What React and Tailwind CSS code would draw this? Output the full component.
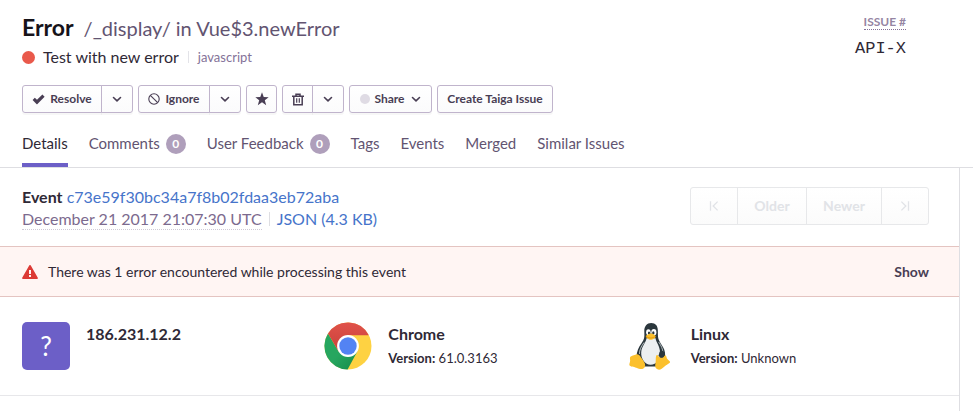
import React from "react";

const tabs = [
  { name: "Details", active: true },
  { name: "Comments", count: 0 },
  { name: "User Feedback", count: 0 },
  { name: "Tags" },
  { name: "Events" },
  { name: "Merged" },
  { name: "Similar Issues" },
];

function Chevron() {
  return (
    <svg width="10" height="7" viewBox="0 0 10 7" fill="none" stroke="currentColor" strokeWidth="1.600" strokeLinecap="round" strokeLinejoin="round" aria-hidden="true">
      <path d="M1.500 1.500 5 4.800l3.500-3.300" />
    </svg>
  );
}

function Check() {
  return (
    <svg width="13" height="11" viewBox="0 0 13 11" fill="currentColor" aria-hidden="true">
      <path d="M.6 5.900 2.800 3.700 5 5.700 10.400.6l2.200 2.100L5.200 10.300H4.700Z" />
    </svg>
  );
}

function Ban() {
  return (
    <svg width="12" height="12" viewBox="0 0 12 12" fill="none" stroke="currentColor" strokeWidth="1.100" aria-hidden="true">
      <circle cx="6" cy="6" r="5.200" />
      <path d="m2.300 2.300 7.400 7.400" />
    </svg>
  );
}

function Star() {
  return (
    <svg width="14" height="14" viewBox="0 0 13 13" fill="currentColor" aria-hidden="true">
      <path d="m6.500.3 1.600 4.300 4.600.2-3.600 2.900 1.300 4.500-3.900-2.600-3.900 2.600 1.300-4.500L.3 4.800l4.600-.2Z" />
    </svg>
  );
}

function Trash() {
  return (
    <svg width="12" height="13" viewBox="0 0 12 13" fill="none" stroke="currentColor" strokeWidth="1.500" aria-hidden="true">
      <path d="M0 3.200h12M4 3V1.200h4V3M1.800 3.500v8.200h8.400V3.500" />
      <path d="M4.700 5.300v4.400M7.300 5.300v4.400" strokeWidth="1.200" />
    </svg>
  );
}

function EdgeArrow({ flip }) {
  return (
    <svg width="10" height="10" viewBox="0 0 10 10" fill="none" stroke="currentColor" strokeWidth="1.300" className={flip ? "rotate-180" : ""} aria-hidden="true">
      <path d="M1.500.3v9.400M8.600.6 4.200 5l4.400 4.400" />
    </svg>
  );
}

function Warning() {
  return (
    <svg width="16" height="14" viewBox="0 0 16 14" aria-hidden="true">
      <path fill="#dc3a35" d="M7.200.5a1 1 0 0 1 1.600 0l7 12.300a.8.8 0 0 1-.7 1.200H.9a.8.8 0 0 1-.7-1.200Z" />
      <path fill="#fff5f3" d="M7 5h2v4H7zM7 10h2v2H7z" />
    </svg>
  );
}

function ChromeLogo() {
  return (
    <svg width="48" height="48" viewBox="0 0 48 48" aria-hidden="true">
      <defs>
        <linearGradient id="chromeRed" x1="0" y1="0" x2="0" y2="1">
          <stop offset="0" stopColor="#e0524a" />
          <stop offset="1" stopColor="#c9413a" />
        </linearGradient>
        <linearGradient id="chromeGreen" x1="0" y1="0" x2="1" y2="1">
          <stop offset=".5" stopColor="#26a65f" />
          <stop offset="1" stopColor="#178a4a" />
        </linearGradient>
      </defs>
      <circle cx="24" cy="24" r="23.500" fill="#fed242" />
      <path fill="url(#chromeGreen)" d="M4 11.500A23.500 23.500 0 0 0 23.600 47.500L33.300 29.400 24 24 14.600 29.400Z" />
      <path fill="url(#chromeRed)" d="M4 11.500A23.500 23.500 0 0 1 44.800 13.200H24L14.600 29.400Z" />
      <circle cx="24" cy="24" r="10.900" fill="#fff" />
      <circle cx="24" cy="24" r="8.700" fill="#5383f3" />
    </svg>
  );
}

function LinuxLogo() {
  return (
    <svg width="48" height="48" viewBox="0 0 48 48" aria-hidden="true">
      <g transform="translate(2 0) scale(.91 1)">
        <path fill="#2b373d" d="M24.400 1c-4.800 0-7.600 3.300-7.600 8 0 3.700.7 6.500-1.200 9.600-2.600 4.200-5.800 7.300-6.900 12.400-1 4.800 2.200 10 6 13.500h17c3-2.200 8.200-6.300 8-12.500-.2-6.500-5.500-10-7.300-15-.9-2.700-.5-5.700-.7-8.500C31.700 3.900 29.200 1 24.400 1Z" />
        <path fill="#eceff1" d="M19.200 16.200c-.3 4.200-5.300 7.600-5.800 14.200-.4 6 4.200 12.300 10.300 12.300 6.700 0 10.800-4.700 10.500-12.200-.2-6.600-4.300-9.800-5-14.300Z" />
        <path fill="none" stroke="#dce2e5" strokeWidth=".8" d="M16.500 20.500c-3 4-5.200 7.500-5 11.500M32.700 20c2.500 3.600 4.500 7 4.500 10.500" />
        <ellipse cx="21.300" cy="10.300" rx="2.500" ry="3" fill="#fff" />
        <ellipse cx="27.300" cy="10.300" rx="2.800" ry="3.200" fill="#fff" />
        <ellipse cx="22" cy="10.900" rx="1.200" ry="1.500" fill="#263238" />
        <ellipse cx="26.700" cy="10.900" rx="1.300" ry="1.600" fill="#263238" />
        <path fill="#fbc02d" d="M18.400 14c1-1 3.500-2.500 5.500-2.500s5.400 1.700 5.400 2.900c0 1.800-3.600 3.400-5.500 3.400-2 0-5.400-2.200-5.400-3.800Z" />
        <path fill="none" stroke="#d88900" strokeWidth=".7" d="M19 14.300c2.200 1.900 5.500 2.500 9.800.3" />
        <path fill="#fbc02d" d="M8.500 32.300c2.400-.5 4.200 2.300 6 4.800 1.800 2.600 4.200 5 2.800 7.900-1.600 3.300-6 2-9.300.7-2.900-1.100-6.700-1-7.500-2.500-.6-1.400 1-3.100.7-5.300-.2-1.800-.4-2.800.8-3.400 1.800-.8 4.600-1.600 6.500-2.200ZM29.800 34c.4-1.300 1.600-1.200 2.600.2 1.200 1.700 5 1.700 6.500-.4.800-1.200 2-.6 2.200 1 .3 2.500 3.200 3.600 4 4.900.6 1.400-3.800 2.800-6.400 5-2.300 2-4.800 3.800-7.500 2.600-3.300-1.500-2.400-4.500-1.900-7.500.3-2.200-.1-3.800.5-5.800Z" />
        <path fill="#2b373d" d="M33.500 30c1-1.800 4.200-1.800 5.300.3.800 1.600.2 4.300-1.500 5.100-1.800.8-4.300-.2-4.700-2.200Z" />
      </g>
    </svg>
  );
}

const buttonBase =
  "flex h-7 cursor-pointer items-center justify-center border border-[#c0b4cc] bg-linear-to-b from-white to-[#fbfbfc] text-xs font-bold text-[#493e54] shadow-[0_2px_0_rgba(0,0,0,0.03)]";

function Button({ className = "", children, ...rest }) {
  return (
    <button type="button" className={`${buttonBase} ${className}`} {...rest}>
      {children}
    </button>
  );
}

function PagerButton({ className = "", children, ...rest }) {
  return (
    <button
      type="button"
      disabled
      className={`flex h-[38px] items-center justify-center border border-[#e7e8ea] bg-linear-to-b from-white to-[#fbfbfb] text-sm font-bold text-[#e1e3e7] ${className}`}
      {...rest}
    >
      {children}
    </button>
  );
}

function ContextItem({ icon, title, version }) {
  return (
    <div className="flex gap-4">
      {icon}
      <div>
        <h3 className="text-base leading-6 font-bold text-[#2f2936]">{title}</h3>
        {version && (
          <p className="text-[13px] leading-6">
            <strong>Version:</strong> {version}
          </p>
        )}
      </div>
    </div>
  );
}

export default function App() {
  return (
    <div className="flex min-h-screen flex-col bg-white font-['Lato',sans-serif] text-[#2f2936]">
      <header className="border-b border-[#dedee2] px-[22px] pt-[13px]">
        <div className="flex justify-between">
          <div>
            <h1 className="flex h-7 items-baseline gap-[10px] leading-7">
              <span className="text-[23px] font-bold text-[#161319]">Error</span>
              <span className="text-xl leading-7 text-[#625471]">/_display/ in Vue$3.newError</span>
            </h1>
            <div className="mt-1 flex items-center">
              <span className="mr-2 size-[13px] rounded-full bg-[#e9594b]" />
              <span className="text-base leading-6">Test with new error</span>
              <span className="mx-[9px] h-3 w-px bg-[#e3e3e8]" />
              <span className="text-[13px] leading-6 text-[#847298]">javascript</span>
            </div>
          </div>
          <div className="mt-[2px] mr-[45px] flex flex-col items-end">
            <span className="border-b border-dotted border-[#847298] text-xs leading-[14px] font-bold text-[#9585a3]">ISSUE #</span>
            <span className="mt-[7px] font-['Liberation_Mono',monospace] text-[17px] leading-6">API-X</span>
          </div>
        </div>

        <div className="mt-4 flex gap-[5px]">
          <div className="flex">
            <Button className="w-20 gap-[5px] rounded-l-[3px]"><Check />Resolve</Button>
            <Button className="-ml-px w-8 rounded-r-[3px]" aria-label="More resolve options"><Chevron /></Button>
          </div>
          <div className="flex">
            <Button className="w-[72px] gap-[5px] rounded-l-[3px]"><Ban />Ignore</Button>
            <Button className="-ml-px w-8 rounded-r-[3px]" aria-label="More ignore options"><Chevron /></Button>
          </div>
          <Button className="w-[31px] rounded-[3px]" aria-label="Bookmark"><Star /></Button>
          <div className="flex">
            <Button className="w-[31px] rounded-l-[3px]" aria-label="Delete"><Trash /></Button>
            <Button className="-ml-px w-8 rounded-r-[3px]" aria-label="More delete options"><Chevron /></Button>
          </div>
          <Button className="w-[83px] rounded-[3px]">
            <span className="mr-1 size-[10px] rounded-full bg-[#dfdbe4]" />
            Share
            <span className="ml-[6px]"><Chevron /></span>
          </Button>
          <Button className="w-[116px] rounded-[3px]">Create Taiga Issue</Button>
        </div>

        <nav className="mt-[14px] flex gap-x-[21px]">
          {tabs.map((tab) => (
            <a
              key={tab.name}
              href="#"
              className={`flex h-10 items-start border-b-4 text-[15px] leading-8 ${tab.active ? "border-[#6c5fc7] text-[#2f2936]" : "border-transparent text-[#625471]"}`}
            >
              {tab.name}
              {tab.count !== undefined && (
                <span className="mt-[7px] ml-[6px] flex size-5 items-center justify-center rounded-full bg-[#af9fbb] text-xs leading-none font-bold text-white">
                  {tab.count}
                </span>
              )}
            </a>
          ))}
        </nav>
      </header>

      <main className="mr-[13px] flex-1 border-r border-[#dedee2]">
        <div className="flex items-start justify-between pt-[18px] pr-[30px] pb-4 pl-[22px]">
          <div className="text-base leading-[22px]">
            <div>
              <strong>Event</strong> <a href="#" className="text-[#4674ca]">c73e59f30bc34a7f8b02fdaa3eb72aba</a>
            </div>
            <div className="flex items-center">
              <time className="border-b border-dotted border-[#cfcad6] leading-5 text-[#7c6a8e]">December 21 2017 21:07:30 UTC</time>
              <span className="mx-[7px] h-[14px] w-px bg-[#dedee2]" />
              <a href="#" className="text-[#4674ca]">JSON (4.3 KB)</a>
            </div>
          </div>
          <div className="flex pt-px">
            <PagerButton className="w-12 rounded-l-[3px]" aria-label="Oldest"><EdgeArrow /></PagerButton>
            <PagerButton className="-ml-px w-[70px]">Older</PagerButton>
            <PagerButton className="-ml-px w-[76px]">Newer</PagerButton>
            <PagerButton className="-ml-px w-12 rounded-r-[3px]" aria-label="Newest"><EdgeArrow flip /></PagerButton>
          </div>
        </div>

        <section className="flex h-[51px] items-center border-y border-[#e4c4c1] bg-[#fff5f3] pr-[30px] pl-[22px]">
          <Warning />
          <p className="ml-[10px] flex-1 text-sm">There was 1 error encountered while processing this event</p>
          <button type="button" className="cursor-pointer text-sm font-bold text-[#493e54]">Show</button>
        </section>

        <section className="grid grid-cols-3 border-b border-[#e7e7ea] pt-[25px] pr-[30px] pb-[25px] pl-[22px]">
          <ContextItem
            icon={<div className="flex size-12 items-center justify-center rounded-[5px] bg-[#6c5fc7] text-[26px] text-white">?</div>}
            title="186.231.12.2"
          />
          <ContextItem icon={<ChromeLogo />} title="Chrome" version="61.0.3163" />
          <ContextItem icon={<LinuxLogo />} title="Linux" version="Unknown" />
        </section>
      </main>
    </div>
  );
}
